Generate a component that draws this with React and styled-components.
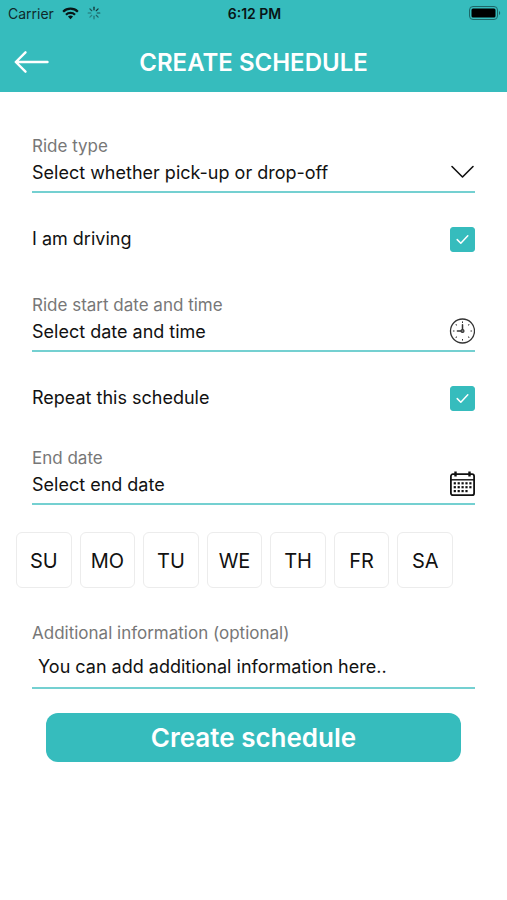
import React, { useState } from 'react';
import styled, { createGlobalStyle } from 'styled-components';

const teal = '#36bcbd';

const GlobalStyle = createGlobalStyle`
  * {
    box-sizing: border-box;
  }
  body {
    margin: 0;
    background: #fff;
    color: #111;
    font-family: Inter, 'Liberation Sans', sans-serif;
  }
  button, input, select {
    margin: 0;
    padding: 0;
    border: 0;
    background: none;
    color: inherit;
    font-family: inherit;
  }
  svg {
    display: block;
    flex-shrink: 0;
  }
`;

const Header = styled.header`
  background: ${teal};
`;
const StatusBar = styled.div`
  display: grid;
  grid-template-columns: 1fr auto 1fr;
  align-items: center;
  height: 28px;
  padding: 0 6px 2px 8px;
  color: #10292b;
  font-size: 14px;
`;
const Carrier = styled.div`
  display: flex;
  align-items: center;
  gap: 8px;
`;
const Time = styled.div`
  color: #081516;
  font-weight: 600;
`;
const Battery = styled.svg`
  justify-self: end;
`;
const NavBar = styled.div`
  display: grid;
  grid-template-columns: 36px 1fr 36px;
  align-items: center;
  height: 64px;
  padding: 4px 14px 0;
`;
const BackButton = styled.button`
  color: #fff;
  cursor: pointer;
`;
const Title = styled.h1`
  margin: 0;
  color: #fff;
  font-size: 24px;
  font-weight: 600;
  text-align: center;
`;

const Form = styled.form`
  padding-top: 42px;
`;
const Field = styled.div`
  margin: 0 32px;
  padding-bottom: ${props => (props.$tall ? 0 : 5)}px;
  border-bottom: 2px solid #74d0d1;
`;
const Label = styled.label`
  display: block;
  color: #777;
  font-size: 17px;
  line-height: 24px;
`;
const FieldRow = styled.div`
  display: flex;
  align-items: center;
  height: ${props => (props.$tall ? 42 : 28)}px;
  padding-left: ${props => (props.$tall ? 6 : 0)}px;
`;
const Select = styled.select`
  flex: 1;
  min-width: 0;
  height: 28px;
  appearance: none;
  font-size: 18px;
  outline: none;
`;
const TextInput = styled.input`
  flex: 1;
  min-width: 0;
  height: 28px;
  font-size: 18px;
  outline: none;
  &::placeholder {
    color: #111;
    opacity: 1;
  }
`;

const CheckRow = styled.div`
  display: flex;
  align-items: center;
  justify-content: space-between;
  margin: 33px 32px ${props => props.$after}px;
  height: 26px;
  font-size: 18px;
  label {
    padding-bottom: 2px;
  }
`;
const CheckBox = styled.span`
  display: grid;
  place-items: center;
  width: 25px;
  height: 25px;
  input,
  svg {
    grid-area: 1 / 1;
  }
  input {
    width: 25px;
    height: 25px;
    appearance: none;
    border: 1px solid ${teal};
    border-radius: 3px;
  }
  input:checked {
    background: ${teal};
  }
  svg {
    pointer-events: none;
  }
`;

const Days = styled.div`
  display: grid;
  grid-template-columns: repeat(7, 1fr);
  gap: 8px;
  margin: 27px 54px 33px 16px;
`;
const Day = styled.button`
  height: 56px;
  padding-top: 2px;
  border: 1px solid ${props => (props.$active ? teal : '#ececec')};
  border-radius: 6px;
  font-size: 20px;
  cursor: pointer;
`;
const SubmitButton = styled.button`
  display: block;
  width: calc(100% - 92px);
  height: 49px;
  margin: 24px auto 0;
  border-radius: 12px;
  background: ${teal};
  color: #fff;
  font-size: 26px;
  font-weight: 600;
  cursor: pointer;
`;

const WifiIcon = () => (
  <svg width="17" height="13" viewBox="0 0 18 13" fill="none" stroke="#081516" strokeWidth="2.4">
    <path d="M1.2 4.6a11.2 11.2 0 0 1 15.6 0" />
    <path d="M4.2 7.8a7 7 0 0 1 9.6 0" />
    <path d="M9 12.6 6.3 9.8a4 4 0 0 1 5.4 0Z" fill="#081516" stroke="none" />
  </svg>
);

const SpinnerIcon = () => (
  <svg width="14" height="14" viewBox="-7 -7 14 14" stroke="#10292b" strokeWidth="1.2" strokeLinecap="round">
    {[1, 0.9, 0.75, 0.6, 0.5, 0.4, 0.5, 0.7].map((opacity, i) => (
      <path key={i} d="M0 -3.2V-5.8" opacity={opacity} transform={`rotate(${i * 45})`} />
    ))}
  </svg>
);

const BatteryIcon = () => (
  <Battery width="32" height="14" viewBox="0 0 32 14">
    <rect x="0.5" y="0.5" width="28" height="13" rx="3.5" fill="none" stroke="#1d6768" />
    <rect x="2.5" y="2.5" width="24" height="9" rx="1.5" fill="#000" />
    <path d="M30 5v4c1.6-.6 1.6-3.4 0-4Z" fill="#1d6768" />
  </Battery>
);

const ArrowIcon = () => (
  <svg width="36" height="24" viewBox="0 0 36 24" fill="none" stroke="currentColor" strokeWidth="2.4" strokeLinecap="round" strokeLinejoin="round">
    <path d="M33.5 12H1.8M11.5 2.3 1.8 12l9.7 9.7" />
  </svg>
);

const ChevronIcon = () => (
  <svg width="25" height="26" viewBox="0 0 25 26" fill="none" stroke="#111" strokeWidth="1.6" strokeLinecap="round" strokeLinejoin="round">
    <path d="M2 7.5 12.5 18 23 7.5" />
  </svg>
);

const ClockIcon = () => (
  <svg width="26" height="26" viewBox="0 0 26 26" fill="none" stroke="#333" strokeLinecap="round">
    <circle cx="13.5" cy="13" r="12" strokeWidth="1.3" />
    {[0, 45, 90, 135, 180, 225, 270, 315].map(angle => (
      <path key={angle} d="M13.5 3.8v.8" strokeWidth="1" transform={`rotate(${angle} 13.5 13)`} />
    ))}
    <path d="M13.5 12V6.8M12.5 13H8.4" strokeWidth="1.5" />
    <circle cx="13.5" cy="13" r="1.5" fill="#777" strokeWidth="1.2" />
  </svg>
);

const dots = [0, 1, 2].flatMap(row =>
  [0, 1, 2, 3, 4].filter(col => row < 2 || col < 4).map(col => [4.7 + col * 3.9, 11.2 + row * 3.9])
);

const CalendarIcon = () => (
  <svg width="26" height="26" viewBox="0 0 26 26" fill="none" stroke="#111" strokeWidth="1.8">
    <rect x="1.9" y="3.2" width="23.2" height="21" rx="2" />
    <path d="M1.9 8.8h23.2" strokeWidth="1.4" />
    <path d="M6.5 .6v5M20.5 .6v5" strokeWidth="2.4" />
    {dots.map(([x, y]) => (
      <rect key={`${x}-${y}`} x={x} y={y} width="2.2" height="2.2" fill="#111" stroke="none" />
    ))}
  </svg>
);

const TickIcon = () => (
  <svg width="13" height="11" viewBox="0 0 13 11" fill="none" stroke="#fff" strokeWidth="1.5" strokeLinecap="round" strokeLinejoin="round">
    <path d="M1.2 5.6 4.8 9.2 11.8 1.8" />
  </svg>
);

const Check = ({ id, label, after }) => (
  <CheckRow $after={after}>
    <label htmlFor={id}>{label}</label>
    <CheckBox>
      <input id={id} type="checkbox" defaultChecked />
      <TickIcon />
    </CheckBox>
  </CheckRow>
);

const days = ['SU', 'MO', 'TU', 'WE', 'TH', 'FR', 'SA'];

export default () => {
  const [selected, setSelected] = useState([]);
  const toggle = day =>
    setSelected(selected.includes(day) ? selected.filter(d => d !== day) : [...selected, day]);

  return (
    <>
      <GlobalStyle />
      <Header>
        <StatusBar>
          <Carrier>
            Carrier
            <WifiIcon />
            <SpinnerIcon />
          </Carrier>
          <Time>6:12 PM</Time>
          <BatteryIcon />
        </StatusBar>
        <NavBar>
          <BackButton type="button" aria-label="Back">
            <ArrowIcon />
          </BackButton>
          <Title>CREATE SCHEDULE</Title>
        </NavBar>
      </Header>
      <Form onSubmit={e => e.preventDefault()}>
        <Field>
          <Label htmlFor="rideType">Ride type</Label>
          <FieldRow>
            <Select id="rideType">
              <option>Select whether pick-up or drop-off</option>
            </Select>
            <ChevronIcon />
          </FieldRow>
        </Field>
        <Check id="driving" label="I am driving" after={41} />
        <Field>
          <Label htmlFor="start">Ride start date and time</Label>
          <FieldRow>
            <TextInput id="start" placeholder="Select date and time" />
            <ClockIcon />
          </FieldRow>
        </Field>
        <Check id="repeat" label="Repeat this schedule" after={35} />
        <Field>
          <Label htmlFor="end">End date</Label>
          <FieldRow>
            <TextInput id="end" placeholder="Select end date" />
            <CalendarIcon />
          </FieldRow>
        </Field>
        <Days>
          {days.map(day => (
            <Day key={day} type="button" $active={selected.includes(day)} onClick={() => toggle(day)}>
              {day}
            </Day>
          ))}
        </Days>
        <Field $tall>
          <Label htmlFor="info">Additional information (optional)</Label>
          <FieldRow $tall>
            <TextInput id="info" placeholder="You can add additional information here.." />
          </FieldRow>
        </Field>
        <SubmitButton type="submit">Create schedule</SubmitButton>
      </Form>
    </>
  );
};
